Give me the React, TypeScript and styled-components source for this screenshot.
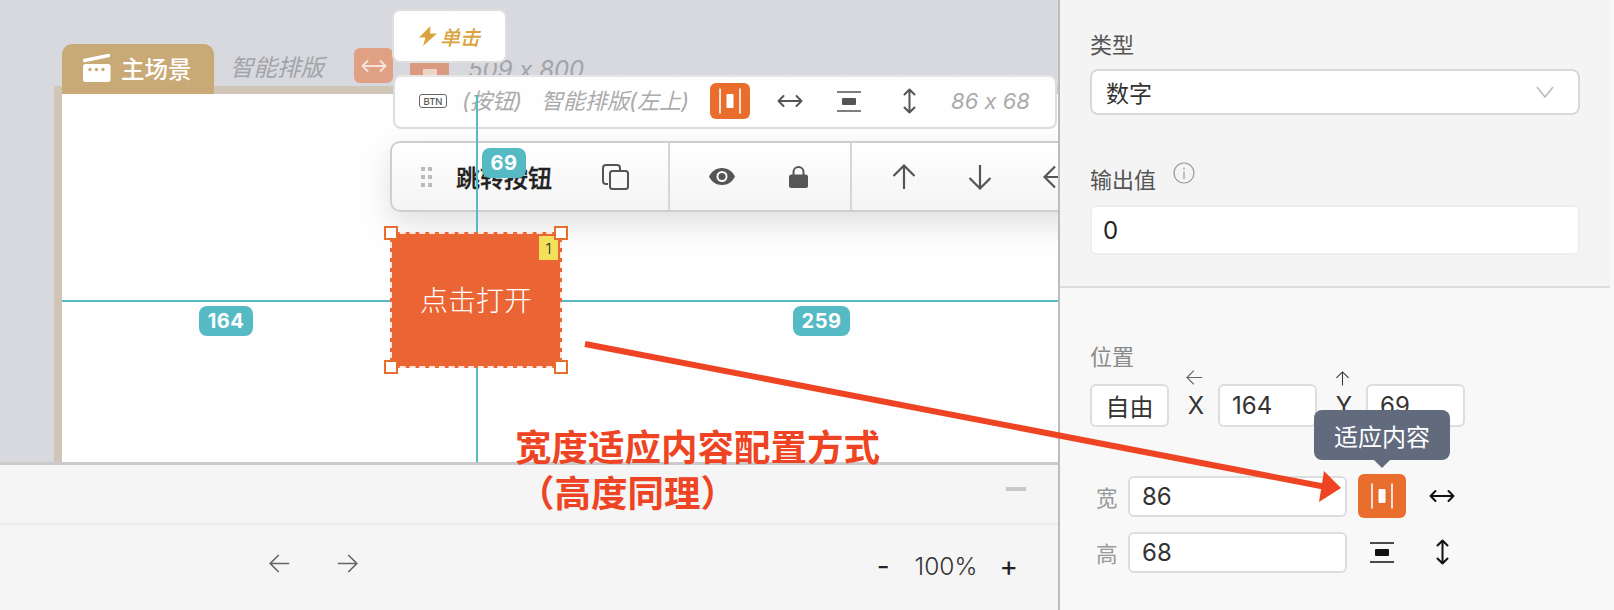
import React from 'react';
import { createGlobalStyle, styled } from 'styled-components';

const GlobalStyle = createGlobalStyle`
  html, body {
    margin: 0;
    padding: 0;
    width: 1614px;
    height: 610px;
    overflow: hidden;
    font-family: "Inter", "Noto Sans CJK SC", sans-serif;
    font-feature-settings: "calt" 0;
  }
  * { box-sizing: border-box; }
`;

const TEAL = '#55bac3';
const ORANGE = '#e96d2c';

/* ---------- icons ---------- */

const DoubleArrowH = ({ color = '#555', w = 26 }: { color?: string; w?: number }) => (
  <svg width={w} height={14} viewBox="0 0 26 14" fill="none" stroke={color} strokeWidth="2" strokeLinecap="round" strokeLinejoin="round">
    <path d="M1.5 7h23M6.5 2 1.5 7l5 5M19.5 2l5 5-5 5" />
  </svg>
);

const DoubleArrowV = ({ color = '#555', h = 26 }: { color?: string; h?: number }) => (
  <svg width={13} height={h} viewBox="0 0 13 26" fill="none" stroke={color} strokeWidth="2" strokeLinecap="round" strokeLinejoin="round">
    <path d="M6.5 1.5v23M1.5 6.5l5-5 5 5M1.5 19.5l5 5 5-5" />
  </svg>
);

const FitWidth = ({ color = '#fff' }: { color?: string }) => (
  <svg width={22} height={26} viewBox="0 0 22 26" fill="none">
    <path d="M1 .5v25M21 .5v25" stroke={color} strokeWidth="1.6" />
    <rect x="7.5" y="6" width="7" height="14" rx="1" fill={color} />
  </svg>
);

const FitHeight = ({ color = '#555' }: { color?: string }) => (
  <svg width={24} height={21} viewBox="0 0 24 21" fill="none">
    <path d="M0 1h24M0 20h24" stroke={color} strokeWidth="1.6" />
    <rect x="5" y="7" width="14" height="7" rx="1" fill={color} />
  </svg>
);

const Arrow = styled.svg<{ $turn: number }>`
  display: block;
  flex: none;
  transform: rotate(${(p) => p.$turn}deg);
`;

const ArrowUp = ({ turn = 0, size = 26, color = '#555', weight = 2.2 }: { turn?: number; size?: number; color?: string; weight?: number }) => (
  <Arrow $turn={turn} width={size} height={size} viewBox="0 0 26 26" fill="none" stroke={color} strokeWidth={weight}>
    <path d="M13 25V1.5M2.5 12 13 1.5 23.5 12" />
  </Arrow>
);

const CopyIcon = () => (
  <svg width={27} height={26} viewBox="0 0 27 26" fill="none" stroke="#555" strokeWidth="2">
    <path d="M6 20H4a3 3 0 0 1-3-3V4a3 3 0 0 1 3-3h11a3 3 0 0 1 3 3v2" />
    <rect x="8" y="7" width="18" height="18" rx="2.5" />
  </svg>
);

const EyeIcon = () => (
  <svg width={26} height={17} viewBox="0 0 26 17">
    <path d="M13 0C7 0 2.500 3.500 0 8.500 2.500 13.500 7 17 13 17s10.500-3.500 13-8.500C23.500 3.500 19 0 13 0Z" fill="#555" />
    <circle cx="13" cy="8.500" r="5.500" fill="#fff" />
    <circle cx="13" cy="8.500" r="3.600" fill="#555" />
  </svg>
);

const LockIcon = () => (
  <svg width={19} height={22} viewBox="0 0 19 22">
    <path d="M4.500 10V6a5 5 0 0 1 10 0v4" fill="none" stroke="#555" strokeWidth="2" />
    <rect x="0" y="8.500" width="19" height="13.500" rx="2.500" fill="#555" />
  </svg>
);

const ClapperIcon = () => (
  <svg width={28} height={28} viewBox="0 0 28 28">
    <path d="M1.500 6.500 25.500 1.500" stroke="#fff" strokeWidth="3.500" strokeLinecap="round" />
    <rect x="0" y="10" width="27.500" height="18" rx="2.500" fill="#fff" />
    <circle cx="7" cy="15.500" r="1.700" fill="#c9a976" />
    <circle cx="13.500" cy="15.500" r="1.700" fill="#c9a976" />
    <circle cx="20" cy="15.500" r="1.700" fill="#c9a976" />
  </svg>
);

const BoltIcon = () => (
  <svg width={18} height={20} viewBox="0 0 18 20">
    <path d="M11.500 0 0 11.500h6.500L4 20 18 7.500h-7L11.500 0Z" fill="#dba33d" />
  </svg>
);

/* ---------- page ---------- */

const Page = styled.div`
  position: relative;
  display: flex;
  width: 1614px;
  height: 610px;
  overflow: hidden;
  background: #f5f5f5;
`;

const Workspace = styled.div`
  display: flex;
  flex-direction: column;
  width: 1058px;
  flex: none;
`;

const Canvas = styled.div`
  position: relative;
  height: 465px;
  flex: none;
  overflow: hidden;
  border-bottom: 3px solid #cbcbcb;
  background-color: #d7d9df;
  background-image:
    repeating-linear-gradient(90deg, rgba(255, 255, 255, 0.04) 0 1px, transparent 1px 7px),
    repeating-linear-gradient(0deg, rgba(0, 0, 0, 0.008) 0 1px, transparent 1px 6px);
`;

const Frame = styled.div`
  position: absolute;
  left: 54px;
  top: 86px;
  width: 1010px;
  height: 380px;
  background: #fefefe;
  border-left: 8px solid #cfc6b8;
  border-top: 8px solid #cfc6b8;
`;

const SceneHeader = styled.div`
  position: absolute;
  left: 62px;
  top: 44px;
  display: flex;
  align-items: flex-start;
`;

const SceneTab = styled.div`
  width: 152px;
  height: 50px;
  display: flex;
  align-items: center;
  gap: 10px;
  padding-left: 21px;
  padding-bottom: 2px;
  border-radius: 10px 10px 0 0;
  background: #c9a976;
  color: #fff;
  font-size: 23.500px;
  font-weight: 500;
`;

const SceneMode = styled.span`
  margin-left: 16px;
  margin-top: 8px;
  width: 97px;
  font-size: 23.500px;
  line-height: 32px;
  font-style: italic;
  white-space: nowrap;
  color: #a3a4a8;
`;

const FadedButton = styled.div<{ $tone: string; $gap: number }>`
  width: 39px;
  height: 35px;
  margin-top: 4px;
  margin-left: ${(p) => p.$gap}px;
  border-radius: 6px;
  background: ${(p) => p.$tone};
  display: flex;
  align-items: center;
  justify-content: center;
`;

const FadedBar = styled.div`
  width: 14px;
  height: 7px;
  margin-top: 14px;
  background: #efd5c8;
`;

const SceneSize = styled.span`
  margin-left: 19px;
  margin-top: 8px;
  font-size: 24px;
  line-height: 36px;
  font-style: italic;
  white-space: nowrap;
  color: #a3a4a8;
`;

const TriggerChip = styled.div`
  position: absolute;
  left: 392px;
  top: 9px;
  width: 115px;
  height: 54px;
  display: flex;
  align-items: center;
  justify-content: center;
  gap: 3px;
  background: #fff;
  border: 2px solid #dfdfe2;
  border-radius: 8px;
  color: #dba33d;
  font-size: 20px;
  font-weight: 500;
  font-style: italic;
`;

const InfoBar = styled.div`
  position: absolute;
  left: 393px;
  top: 75px;
  width: 664px;
  height: 54px;
  display: flex;
  align-items: center;
  padding-left: 24px;
  padding-bottom: 2px;
  background: #fefefe;
  border: 2px solid #dddddd;
  border-top-color: #e6e6e6;
  border-radius: 8px;
`;

const InfoSlot = styled.div<{ $gap: number }>`
  display: flex;
  align-items: center;
  justify-content: center;
  flex: none;
  margin-left: ${(p) => p.$gap}px;
`;

const BtnTag = styled.span`
  display: flex;
  align-items: center;
  justify-content: center;
  width: 28px;
  height: 14px;
  border: 1.500px solid #666;
  border-radius: 3px;
  font-size: 9.500px;
  font-weight: 500;
  color: #555;
`;

const InfoText = styled.span`
  font-size: 22px;
  line-height: 28px;
  font-style: italic;
  white-space: nowrap;
  color: #ababab;
`;

const ActiveButton = styled.div<{ $w: number; $h: number }>`
  width: ${(p) => p.$w}px;
  height: ${(p) => p.$h}px;
  flex: none;
  display: flex;
  align-items: center;
  justify-content: center;
  border-radius: 6px;
  background: ${ORANGE};
`;

const ActionBar = styled.div`
  position: absolute;
  left: 390px;
  top: 141px;
  width: 720px;
  height: 71px;
  display: flex;
  background: linear-gradient(180deg, #ffffff 0%, #f4f4f4 100%);
  border: 2px solid #cecece;
  border-radius: 10px;
  box-shadow: 0 12px 30px rgba(0, 0, 0, 0.12);
`;

const ActionGroup = styled.div<{ $w: number; $pad: number; $gap: number }>`
  width: ${(p) => p.$w}px;
  flex: none;
  display: flex;
  align-items: center;
  padding-left: ${(p) => p.$pad}px;
  gap: ${(p) => p.$gap}px;
  border-right: 2px solid #d6d6d6;
  &:last-child { border-right: 0; }
`;

const DragDots = styled.div`
  display: grid;
  grid-template-columns: 4px 4px;
  grid-auto-rows: 4px;
  gap: 4px 3px;
  flex: none;
  margin-right: 24px;
  & > i { background: #bbbbbb; }
`;

const WidgetName = styled.span`
  width: 96px;
  font-size: 24px;
  font-weight: 500;
  -webkit-text-stroke: 0.300px #222;
  white-space: nowrap;
  color: #222;
`;

const GuideH = styled.div<{ $left: number; $width: number }>`
  position: absolute;
  left: ${(p) => p.$left}px;
  width: ${(p) => p.$width}px;
  top: 300px;
  height: 2px;
  background: ${TEAL};
`;

const GuideV = styled.div<{ $top: number; $height: number }>`
  position: absolute;
  left: 476px;
  width: 2px;
  top: ${(p) => p.$top}px;
  height: ${(p) => p.$height}px;
  background: ${TEAL};
`;

const GuideBadge = styled.div<{ $left: number; $top: number; $width: number }>`
  position: absolute;
  left: ${(p) => p.$left}px;
  top: ${(p) => p.$top}px;
  width: ${(p) => p.$width}px;
  height: 30px;
  display: flex;
  align-items: center;
  justify-content: center;
  border-radius: 8px;
  background: ${TEAL};
  color: #fff;
  font-size: 20px;
  font-weight: 700;
  letter-spacing: 0.500px;
`;

const Widget = styled.div`
  position: absolute;
  left: 390px;
  top: 232px;
  width: 172px;
  height: 136px;
  display: flex;
  align-items: center;
  justify-content: center;
  padding-bottom: 2px;
  background: #eb6534;
  border: 2px dashed rgba(255, 255, 255, 0.85);
  color: #fff;
  font-size: 28px;
  font-weight: 300;
`;

const Handle = styled.i<{ $x: 'left' | 'right'; $y: 'top' | 'bottom' }>`
  position: absolute;
  ${(p) => p.$x}: -8px;
  ${(p) => p.$y}: -8px;
  width: 14px;
  height: 14px;
  background: #fff;
  border: 2px solid ${ORANGE};
`;

const OrderTag = styled.span`
  position: absolute;
  top: 2px;
  right: 2px;
  width: 19px;
  height: 24px;
  display: flex;
  align-items: center;
  justify-content: center;
  background: #f2e05a;
  color: #222;
  font-size: 15px;
  font-weight: 300;
`;

/* ---------- bottom bar ---------- */

const BottomBar = styled.div`
  flex: 1;
  display: flex;
  flex-direction: column;
  background: #f5f5f5;
`;

const BottomTop = styled.div`
  height: 60px;
  flex: none;
  display: flex;
  align-items: center;
  justify-content: flex-end;
  padding: 0 32px 10px 0;
  border-bottom: 2px solid #ebebeb;
`;

const Collapse = styled.i`
  width: 20px;
  height: 4px;
  background: #c8c8c8;
`;

const BottomTools = styled.div`
  flex: 1;
  display: flex;
  align-items: center;
  padding: 0 40px 8px 269px;
`;

const HistoryGroup = styled.div`
  display: flex;
  gap: 47px;
`;

const ZoomGroup = styled.div`
  margin-left: auto;
  margin-top: 5px;
  display: flex;
  align-items: center;
  color: #333;
`;

const ZoomStep = styled.span`
  font-size: 28px;
  font-weight: 400;
  line-height: 28px;
  color: #222;
`;

const ZoomValue = styled.span`
  margin: 0 22px 0 25px;
  font-size: 24.500px;
  font-weight: 300;
`;

/* ---------- side panel ---------- */

const SidePanel = styled.aside`
  width: 556px;
  flex: none;
  border-left: 2px solid #bcbcbc;
  display: flex;
  flex-direction: column;
  background: #f8f8f8;
`;

const PropsSection = styled.section`
  height: 288px;
  flex: none;
  margin-right: 4px;
  padding: 30px 30px 0;
  background: #f4f4f4;
  border-bottom: 2px solid #dddddd;
`;

const LayoutSection = styled.section`
  flex: 1;
  padding: 54px 30px 0;
`;

const FieldLabel = styled.div<{ $muted?: boolean; $top?: number }>`
  position: relative;
  height: 30px;
  line-height: 30px;
  margin-top: ${(p) => p.$top ?? 0}px;
  font-size: 22px;
  color: ${(p) => (p.$muted ? '#8a8a8a' : '#555')};
`;

const InfoDot = styled.svg`
  position: absolute;
  left: 83px;
  top: -3px;
`;

const SelectBox = styled.div`
  width: 490px;
  height: 46px;
  margin-top: 9px;
  padding: 0 24px 0 14px;
  display: flex;
  align-items: center;
  justify-content: space-between;
  background: #fff;
  border: 2px solid #d8d8d8;
  border-radius: 8px;
  font-size: 23px;
  color: #333;
`;

const ValueInput = styled.div`
  width: 490px;
  height: 50px;
  margin-top: 10px;
  padding-left: 11px;
  display: flex;
  align-items: center;
  background: #fff;
  border: 2px solid #eeeeee;
  border-radius: 6px;
  font-size: 24px;
  color: #222;
`;

const PositionRow = styled.div`
  display: flex;
  align-items: center;
  height: 43px;
  margin-top: 12px;
`;

const FieldBox = styled.div<{ $w: number; $center?: boolean }>`
  width: ${(p) => p.$w}px;
  height: 100%;
  flex: none;
  padding-left: ${(p) => (p.$center ? 0 : 12)}px;
  display: flex;
  align-items: center;
  justify-content: ${(p) => (p.$center ? 'center' : 'flex-start')};
  background: #fff;
  border: 2px solid #dddddd;
  border-radius: 6px;
  font-size: 24px;
  color: #333;
`;

const AxisLabel = styled.div`
  position: relative;
  width: 49px;
  padding-left: 5px;
  flex: none;
  text-align: center;
  font-size: 24px;
  color: #333;
`;

const AxisHint = styled.span<{ $left: number; $top: number }>`
  position: absolute;
  left: ${(p) => p.$left}px;
  top: ${(p) => p.$top}px;
`;

const SizeRow = styled.div<{ $top: number }>`
  display: flex;
  align-items: center;
  height: 44px;
  margin-top: ${(p) => p.$top}px;
`;

const SizeLabel = styled.span`
  width: 38px;
  padding-left: 6px;
  flex: none;
  font-size: 21.500px;
  color: #9a9a9a;
`;

const SizeInput = styled(FieldBox)`
  height: 41px;
  font-size: 24px;
`;

const SizeTool = styled.div<{ $w: number; $gap?: number }>`
  position: relative;
  width: ${(p) => p.$w}px;
  margin-left: ${(p) => p.$gap ?? 0}px;
  flex: none;
  display: flex;
  align-items: center;
  justify-content: center;
`;

const Tooltip = styled.div`
  position: absolute;
  left: 50%;
  bottom: calc(100% + 14px);
  transform: translateX(-50%);
  width: 136px;
  height: 50px;
  display: flex;
  align-items: center;
  justify-content: center;
  border-radius: 8px;
  background: #626a7e;
  color: #fff;
  font-size: 24px;
  white-space: nowrap;
  z-index: 2;
  &::after {
    content: '';
    position: absolute;
    left: 50%;
    top: 100%;
    margin-left: -8px;
    border: 8px solid transparent;
    border-bottom-width: 0;
    border-top-color: #626a7e;
  }
`;

/* ---------- annotation and watermark ---------- */

const Annotation = styled.div`
  position: absolute;
  left: 515px;
  top: 425px;
  display: flex;
  flex-direction: column;
  color: #ee4423;
  font-size: 36.500px;
  font-weight: 700;
  line-height: 46px;
  white-space: nowrap;
  z-index: 5;
`;

const AnnotationSub = styled.span`
  margin-left: 3px;
`;

const AnnotationArrow = styled.svg`
  position: absolute;
  left: 0;
  top: 0;
  z-index: 5;
  pointer-events: none;
`;

const Watermark = styled.div`
  position: absolute;
  left: -500px;
  top: -297px;
  display: grid;
  grid-template-columns: repeat(7, 340px);
  grid-auto-rows: 80px;
  pointer-events: none;
  z-index: 6;
`;

const WatermarkCell = styled.div`
  position: relative;
`;

const WatermarkText = styled.div`
  position: absolute;
  left: 0;
  top: 0;
  transform-origin: 0 0;
  transform: rotate(45deg);
  font-family: "Roboto", sans-serif;
  font-size: 23px;
  line-height: 30px;
  white-space: nowrap;
  color: rgba(40, 40, 40, 0.018);
`;

const App = () => {
  return (
    <Page>
      <GlobalStyle />
      <Workspace>
        <Canvas>
          <Frame />
          <SceneHeader>
            <SceneTab>
              <ClapperIcon />
              <span>主场景</span>
            </SceneTab>
            <SceneMode>智能排版</SceneMode>
            <FadedButton $tone="#e0a084" $gap={27}>
              <DoubleArrowH color="#f5e2d8" />
            </FadedButton>
            <FadedButton $tone="#d99a80" $gap={17}>
              <FadedBar />
            </FadedButton>
            <SceneSize>509 x 800</SceneSize>
          </SceneHeader>
          <TriggerChip>
            <BoltIcon />
            <span>单击</span>
          </TriggerChip>
          <InfoBar>
            <BtnTag>BTN</BtnTag>
            <InfoSlot $gap={15}><InfoText>(按钮)</InfoText></InfoSlot>
            <InfoSlot $gap={19}><InfoText>智能排版(左上)</InfoText></InfoSlot>
            <InfoSlot $gap={21}>
              <ActiveButton $w={40} $h={36}><FitWidth /></ActiveButton>
            </InfoSlot>
            <InfoSlot $gap={27}><DoubleArrowH /></InfoSlot>
            <InfoSlot $gap={34}><FitHeight /></InfoSlot>
            <InfoSlot $gap={42}><DoubleArrowV /></InfoSlot>
            <InfoSlot $gap={35}><InfoText>86 x 68</InfoText></InfoSlot>
          </InfoBar>
          <ActionBar>
            <ActionGroup $w={278} $pad={29} $gap={0}>
              <DragDots>
                <i /><i /><i /><i /><i /><i />
              </DragDots>
              <WidgetName>跳转按钮</WidgetName>
              <InfoSlot $gap={50}><CopyIcon /></InfoSlot>
            </ActionGroup>
            <ActionGroup $w={182} $pad={39} $gap={54}>
              <EyeIcon />
              <LockIcon />
            </ActionGroup>
            <ActionGroup $w={250} $pad={39} $gap={50}>
              <ArrowUp />
              <ArrowUp turn={180} />
              <ArrowUp turn={270} />
            </ActionGroup>
          </ActionBar>
          <GuideV $top={95} $height={137} />
          <GuideV $top={368} $height={100} />
          <GuideH $left={62} $width={328} />
          <GuideH $left={562} $width={496} />
          <GuideBadge $left={482} $top={148} $width={44}>69</GuideBadge>
          <GuideBadge $left={199} $top={306} $width={54}>164</GuideBadge>
          <GuideBadge $left={793} $top={306} $width={57}>259</GuideBadge>
          <Widget>
            点击打开
            <OrderTag>1</OrderTag>
            <Handle $x="left" $y="top" />
            <Handle $x="right" $y="top" />
            <Handle $x="left" $y="bottom" />
            <Handle $x="right" $y="bottom" />
          </Widget>
        </Canvas>
        <BottomBar>
          <BottomTop>
            <Collapse />
          </BottomTop>
          <BottomTools>
            <HistoryGroup>
              <ArrowUp turn={270} size={21} weight={2} color="#666" />
              <ArrowUp turn={90} size={21} weight={2} color="#666" />
            </HistoryGroup>
            <ZoomGroup>
              <ZoomStep>-</ZoomStep>
              <ZoomValue>100%</ZoomValue>
              <ZoomStep>+</ZoomStep>
            </ZoomGroup>
          </BottomTools>
        </BottomBar>
      </Workspace>

      <SidePanel>
        <PropsSection>
          <FieldLabel>类型</FieldLabel>
          <SelectBox>
            数字
            <svg width={18} height={12} viewBox="0 0 18 12" fill="none" stroke="#bbb" strokeWidth="1.600">
              <path d="M1 1l8 10 8-10" />
            </svg>
          </SelectBox>
          <FieldLabel $top={50}>
            输出值
            <InfoDot width={22} height={22} viewBox="0 0 22 22" fill="none" stroke="#999" strokeWidth="1.200">
              <circle cx="11" cy="11" r="10" />
              <path d="M11 9.500V17M11 5.500v2" />
            </InfoDot>
          </FieldLabel>
          <ValueInput>0</ValueInput>
        </PropsSection>
        <LayoutSection>
          <FieldLabel $muted>位置</FieldLabel>
          <PositionRow>
            <FieldBox $w={79} $center>自由</FieldBox>
            <AxisLabel>
              <AxisHint $left={17} $top={-22}>
                <ArrowUp turn={270} size={17} weight={1.800} color="#666" />
              </AxisHint>
              X
            </AxisLabel>
            <FieldBox $w={99}>164</FieldBox>
            <AxisLabel>
              <AxisHint $left={18} $top={-20}>
                <ArrowUp size={15} weight={1.800} color="#333" />
              </AxisHint>
              Y
            </AxisLabel>
            <FieldBox $w={99}>69</FieldBox>
          </PositionRow>
          <SizeRow $top={47}>
            <SizeLabel>宽</SizeLabel>
            <SizeInput $w={219}>86</SizeInput>
            <SizeTool $w={48} $gap={11}>
              <ActiveButton $w={48} $h={44}><FitWidth /></ActiveButton>
              <Tooltip>适应内容</Tooltip>
            </SizeTool>
            <SizeTool $w={72}><DoubleArrowH color="#111" /></SizeTool>
          </SizeRow>
          <SizeRow $top={12}>
            <SizeLabel>高</SizeLabel>
            <SizeInput $w={219}>68</SizeInput>
            <SizeTool $w={48} $gap={11}><FitHeight color="#111" /></SizeTool>
            <SizeTool $w={72}><DoubleArrowV color="#111" /></SizeTool>
          </SizeRow>
        </LayoutSection>
      </SidePanel>

      <Annotation>
        <span>宽度适应内容配置方式</span>
        <AnnotationSub>（高度同理）</AnnotationSub>
      </Annotation>
      <AnnotationArrow width={1614} height={610} viewBox="0 0 1614 610">
        <path d="M585 344 1326 487" stroke="#ee4423" strokeWidth="6" />
        <path d="M1341 488 1324 471 1319 502Z" fill="#ee4423" />
      </AnnotationArrow>

      <Watermark>
        {Array.from({ length: 84 }, (_, i) => (
          <WatermarkCell key={i}>
            <WatermarkText>
              moyukai05 - 2024/05/28
              <br />
              11:41:41
            </WatermarkText>
          </WatermarkCell>
        ))}
      </Watermark>
    </Page>
  );
};

export default App;
